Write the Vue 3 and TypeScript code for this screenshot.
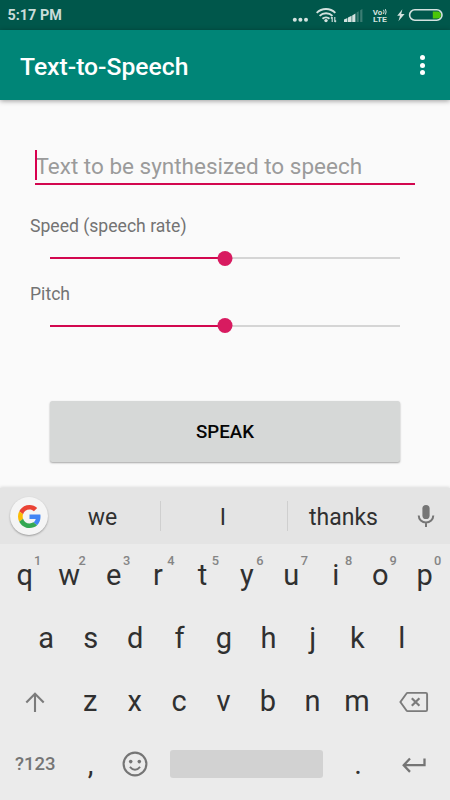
<script setup lang="ts">
import { ref } from 'vue'

interface Slider {
  label: string
  value: number
}

const text = ref('')
const sliders = ref<Slider[]>([
  { label: 'Speed (speech rate)', value: 50 },
  { label: 'Pitch', value: 50 },
])

const suggestions: string[] = ['we', 'I', 'thanks']
const topRow: string[] = [...'qwertyuiop']
const homeRow: string[] = [...'asdfghjkl']
const bottomRow: string[] = [...'zxcvbnm']
</script>

<template>
  <div class="screen">
    <header class="status">
      <span class="clock">5:17 PM</span>
      <svg class="status-icons" width="154" height="30" viewBox="0 0 154 30">
        <g fill="#d3e2df">
          <circle cx="4.8" cy="19.8" r="2" />
          <circle cx="10.4" cy="19.8" r="2" />
          <circle cx="16" cy="19.8" r="2" />
        </g>
        <g fill="none" stroke="#d3e2df" stroke-width="1.9">
          <path d="M26.7 12.8a13.2 13.2 0 0 1 18.6 0" />
          <path d="M29.6 15.9a9.2 9.2 0 0 1 12.9 0" />
          <path d="M32.5 18.8a5.1 5.1 0 0 1 7 0" />
        </g>
        <circle cx="36" cy="20.6" r="1.7" fill="#d3e2df" />
        <path d="M42.2 22v-5M40.9 18.3l1.3-1.5M44.8 17v5M46.1 20.7l-1.3 1.5" fill="none" stroke="#d3e2df" stroke-width="1.1" />
        <path d="M54 22v-2.5l3.4-1.6V22zM58 22v-4.4l3.6-1.8V22zM62.2 22v-6.6l3.2-1.8V22z" fill="#d3e2df" />
        <path d="M66.6 22V12.4l2.1-1.2V22zM70.2 22V10.3l2.2-1.3V22z" fill="#3b7d73" />
        <text x="82.8" y="14.6" class="volte" textLength="9.6" lengthAdjust="spacingAndGlyphs">Vo</text>
        <path d="M93.5 9.8q1.2 2 0 4.2M95.4 9.2q1.4 2.6 0 5.4" fill="none" stroke="#d3e2df" stroke-width="1" />
        <text x="83" y="22.2" class="volte" textLength="14" lengthAdjust="spacingAndGlyphs">LTE</text>
        <path d="M112.4 9.2l-5.2 6.5h2.8l-1.6 5.6 6.2-7.2h-3.4z" fill="#d3e2df" />
        <rect x="119.6" y="9.8" width="32.4" height="10.4" rx="5.2" fill="none" stroke="#d3e2df" stroke-width="1.6" />
        <path d="M142.8 11.5h4.6a3.5 3.5 0 0 1 0 7h-4.6z" fill="#4bc60a" />
      </svg>
    </header>

    <div class="appbar">
      <h1>Text-to-Speech</h1>
      <button class="menu" aria-label="Menu"><i></i><i></i><i></i></button>
    </div>

    <main>
      <div class="field">
        <i class="caret"></i>
        <input v-model="text" placeholder="Text to be synthesized to speech" />
      </div>
      <div v-for="s in sliders" :key="s.label" class="control">
        <label>{{ s.label }}</label>
        <div class="track">
          <div class="filled" :style="{ width: s.value + '%' }"></div>
          <i class="thumb"></i>
          <div class="rest"></div>
        </div>
      </div>
      <button class="speak">SPEAK</button>
    </main>

    <section class="keyboard">
      <div class="suggest">
        <div class="google">
          <svg width="23" height="23" viewBox="0 0 48 48">
            <path fill="#ea4335" d="M24 9.5c3.54 0 6.71 1.22 9.21 3.6l6.85-6.85C35.9 2.38 30.47 0 24 0 14.62 0 6.51 5.38 2.56 13.22l7.98 6.19C12.43 13.72 17.74 9.5 24 9.5z" />
            <path fill="#4285f4" d="M46.98 24.55c0-1.57-.15-3.09-.38-4.55H24v9.02h12.94c-.58 2.96-2.26 5.48-4.78 7.18l7.73 6c4.51-4.18 7.09-10.36 7.09-17.65z" />
            <path fill="#fbbc05" d="M10.53 28.59c-.48-1.45-.76-2.99-.76-4.59s.27-3.14.76-4.59l-7.98-6.19C.92 16.46 0 20.12 0 24c0 3.88.92 7.54 2.56 10.78l7.97-6.19z" />
            <path fill="#34a853" d="M24 48c6.48 0 11.93-2.13 15.89-5.81l-7.73-6c-2.15 1.45-4.92 2.3-8.16 2.3-6.26 0-11.57-4.22-13.47-9.91l-7.98 6.19C6.51 42.62 14.62 48 24 48z" />
          </svg>
        </div>
        <span v-for="w in suggestions" :key="w" class="word">{{ w }}</span>
        <svg class="mic" width="18" height="24" viewBox="0 0 18 24">
          <rect x="5.4" y="1" width="7.2" height="14" rx="3.6" fill="#757575" />
          <path d="M1.7 11.6a7.3 6.8 0 0 0 14.6 0M9 18.4V23" fill="none" stroke="#757575" stroke-width="2" />
        </svg>
      </div>

      <div class="row top">
        <span v-for="(k, i) in topRow" :key="k" class="key">{{ k }}<sup>{{ (i + 1) % 10 }}</sup></span>
      </div>
      <div class="row home">
        <span v-for="k in homeRow" :key="k" class="key">{{ k }}</span>
      </div>
      <div class="row bottom">
        <span class="key wide">
          <svg width="20" height="22" viewBox="0 0 20 22" fill="none" stroke="#7b7b7b" stroke-width="2.1">
            <path d="M10 21V3M1.3 11.5L10 2.8l8.7 8.7" />
          </svg>
        </span>
        <span v-for="k in bottomRow" :key="k" class="key">{{ k }}</span>
        <span class="key wide">
          <svg width="30" height="22" viewBox="0 0 30 22" fill="none" stroke="#7b7b7b" stroke-width="1.9">
            <path d="M8.6 1.9h18.2q1.3 0 1.3 1.3v15.6q0 1.3-1.3 1.3H8.6q-.7 0-1.1-.6L1.4 11l6.1-8.5q.4-.6 1.1-.6z" />
            <path d="M12.8 7.2l7.6 7.6M20.4 7.2l-7.6 7.6" stroke-width="2.2" />
          </svg>
        </span>
      </div>
      <div class="row last">
        <span class="key symbols">?123</span>
        <span class="key">,</span>
        <span class="key">
          <svg class="emoji" width="26" height="26" viewBox="0 0 26 26">
            <circle cx="13" cy="13" r="11.4" fill="none" stroke="#757575" stroke-width="2.1" />
            <circle cx="8.7" cy="10.6" r="1.8" fill="#757575" />
            <circle cx="17.3" cy="10.6" r="1.8" fill="#757575" />
            <path d="M7.9 15.8q5.1 6 10.2 0" fill="none" stroke="#757575" stroke-width="1.9" />
          </svg>
        </span>
        <span class="space"></span>
        <span class="key">.</span>
        <span class="key enter">
          <svg width="24" height="16" viewBox="0 0 24 16" fill="none" stroke="#757575" stroke-width="2.3">
            <path d="M22.5 1.6v6.6H2.2M8 1.5L1.7 8.2 8 14.9" />
          </svg>
        </span>
      </div>
    </section>
  </div>
</template>

<style>
body {
  margin: 0;
}
</style>

<style scoped>
.screen {
  width: 450px;
  height: 800px;
  display: flex;
  flex-direction: column;
  overflow: hidden;
  background: #fafafa;
  font-family: Roboto, sans-serif;
}
button {
  border: 0;
  padding: 0;
  font-family: inherit;
}
svg {
  display: block;
}
.status {
  height: 30px;
  flex: none;
  display: flex;
  justify-content: space-between;
  background: #00574b;
}
.clock {
  padding-left: 7.5px;
  font-size: 14.4px;
  font-weight: 700;
  line-height: 32px;
  color: #cadcd9;
}
.status-icons {
  margin-right: 6px;
}
.volte {
  font-size: 7.4px;
  font-weight: 700;
  fill: #d3e2df;
}
.appbar {
  height: 70px;
  flex: none;
  display: flex;
  align-items: center;
  justify-content: space-between;
  padding: 0 20px;
  box-sizing: border-box;
  background: #008577;
  box-shadow: 0 1px 5px rgba(0, 0, 0, 0.38);
}
h1 {
  margin: 3px 0 0;
  font-size: 24.7px;
  font-weight: 500;
  line-height: 30px;
  color: #fff;
}
.menu {
  display: flex;
  flex-direction: column;
  align-items: center;
  gap: 2.5px;
  width: 15px;
  background: none;
}
.menu i {
  width: 5px;
  height: 5px;
  border-radius: 50%;
  background: #fff;
}
main {
  height: 388px;
  flex: none;
  display: flex;
  flex-direction: column;
  box-sizing: border-box;
  padding: 50px 30px 0;
}
.field {
  position: relative;
  height: 33px;
  margin: 0 5px 29px;
  border-bottom: 2px solid #d2074f;
}
.caret {
  position: absolute;
  left: 0;
  top: 0;
  width: 2px;
  height: 30px;
  background: #d8004f;
}
.field input {
  display: block;
  width: 100%;
  height: 31px;
  box-sizing: border-box;
  border: 0;
  padding: 0 0 0 0.5px;
  background: none;
  outline: none;
  font-family: inherit;
  font-size: 22.5px;
}
.field input::placeholder {
  color: #9b9b9b;
  opacity: 1;
}
.control {
  height: 67.5px;
}
.control label {
  display: block;
  font-size: 17.6px;
  line-height: 24px;
  color: #737373;
}
.track {
  display: flex;
  align-items: center;
  height: 15px;
  margin: 12.5px 20px 0;
}
.filled {
  height: 2px;
  background: #d2074f;
}
.thumb {
  flex: none;
  width: 15px;
  height: 15px;
  margin: 0 -7.5px;
  border-radius: 50%;
  background: #d81b60;
  transform: translateX(-0.5px);
  z-index: 1;
}
.rest {
  flex: 1;
  height: 2px;
  background: #d5d5d5;
}
.speak {
  height: 61px;
  margin: 52px 20px 0;
  border-radius: 2.5px;
  background: #d6d8d7;
  color: #050505;
  font-size: 18.7px;
  font-weight: 500;
  box-shadow: 0 1px 2px rgba(0, 0, 0, 0.34);
}
.keyboard {
  flex: 1;
  background: #ebebeb;
  color: #303030;
  box-shadow: 0 -1px 3px rgba(0, 0, 0, 0.13);
}
.suggest {
  height: 56px;
  display: grid;
  grid-template-columns: 57px 104px 127px 112px 50px;
  align-items: center;
  background: #e4e4e4;
}
.google {
  display: grid;
  place-items: center;
  width: 38px;
  height: 38px;
  margin-left: 10px;
  border-radius: 50%;
  background: #f5f5f5;
  box-shadow: 0 1px 2px rgba(0, 0, 0, 0.32);
}
.word {
  height: 30px;
  padding-right: 12px;
  text-align: center;
  font-size: 23px;
  line-height: 33px;
}
.word:nth-of-type(-n + 2) {
  border-right: 1px solid #cfcfcf;
}
.word:nth-of-type(2) {
  padding-right: 2px;
}
.word:nth-of-type(3) {
  padding: 0 1px 0 0;
}
.mic {
  justify-self: center;
  margin-left: 1px;
}
.row {
  display: flex;
  height: 63px;
}
.key {
  position: relative;
  display: flex;
  align-items: center;
  justify-content: center;
  width: 44.45px;
  flex: none;
  font-size: 29px;
  line-height: 63px;
}
.top {
  padding-left: 2.5px;
}
.home {
  padding-left: 24px;
}
.key sup {
  position: absolute;
  left: 31.5px;
  top: 9px;
  font-size: 12.8px;
  font-weight: 500;
  line-height: 15px;
  color: #858585;
}
.bottom {
  padding-left: 2px;
}
.wide {
  width: 66px;
}
.bottom .wide:last-child {
  width: 69.5px;
}
.last {
  padding-left: 2px;
}
.last .symbols {
  width: 66.5px;
  font-size: 18.5px;
  font-weight: 500;
  color: #757575;
}
.emoji {
  margin-bottom: 2px;
}
.space {
  align-self: center;
  width: 153px;
  height: 28px;
  margin: 0 13px 2px 12.5px;
  border-radius: 3px;
  background: #d2d2d2;
}
.last .enter {
  width: 66.5px;
}
</style>
